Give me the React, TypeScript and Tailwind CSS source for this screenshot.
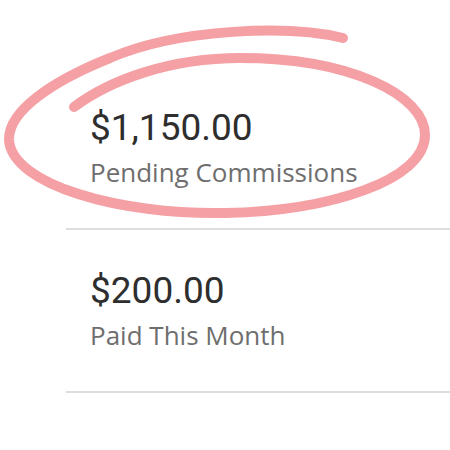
const stats = [
  { amount: "$1,150.00", label: "Pending Commissions" },
  { amount: "$200.00", label: "Paid This Month" },
];

function Scribble() {
  return (
    <svg
      className="pointer-events-none absolute left-0 top-0"
      width="450"
      height="450"
      viewBox="0 0 450 450"
      fill="none"
    >
      <path
        d="M 343 38 C 290 25, 180 28, 110 58 C 55 80, 8 110, 9 140 C 12 185, 120 215, 225 213 C 330 211, 425 180, 425 135 C 425 95, 350 58, 240 58 C 170 58, 110 80, 74 107"
        stroke="#f5a0a5"
        strokeWidth="10"
        strokeLinecap="round"
        strokeLinejoin="round"
      />
    </svg>
  );
}

export default function App() {
  return (
    <div className="relative h-[450px] w-[450px] overflow-hidden bg-white">
      <div className="ml-[66px] pt-[67px]">
        {stats.map((s) => (
          <div key={s.label} className="border-b-2 border-[#dedede] pb-[39px] pl-6 pt-[41px]">
            <div className="font-['Roboto',sans-serif] text-[37px] leading-[40px] text-[#2e2e2e]">
              {s.amount}
            </div>
            <div className="mt-[7px] font-['Open_Sans',sans-serif] text-[26px] leading-[34px] text-[#6e6e6e]">
              {s.label}
            </div>
          </div>
        ))}
      </div>
      <Scribble />
    </div>
  );
}
